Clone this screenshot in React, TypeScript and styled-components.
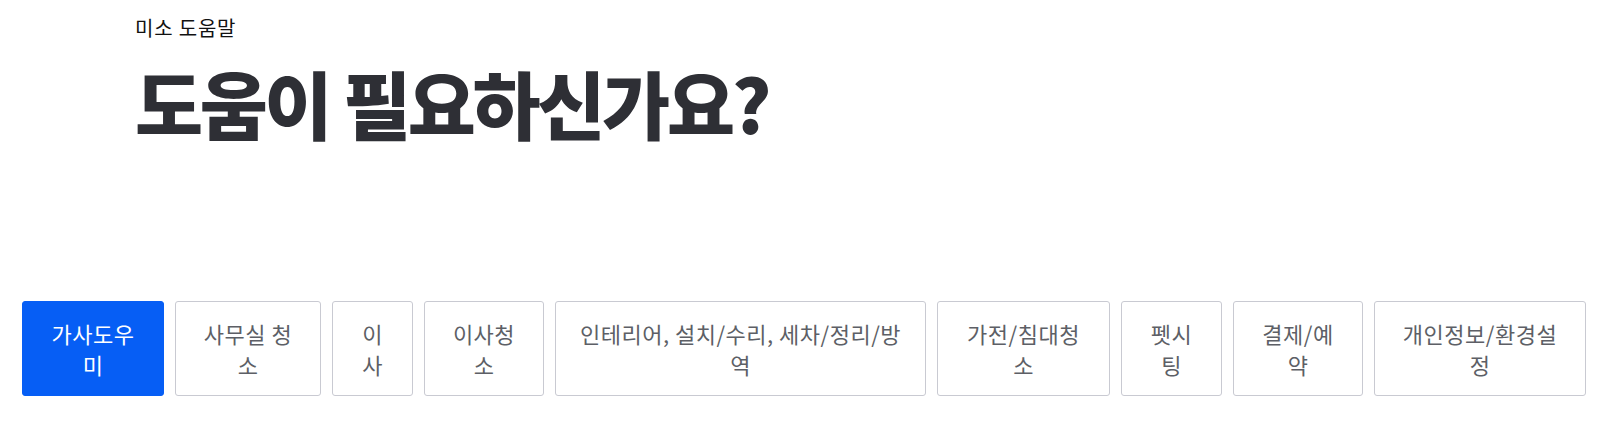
import React from "react";
import styled, { createGlobalStyle } from "styled-components";

const GlobalStyle = createGlobalStyle`
  html, body {
    margin: 0;
    padding: 0;
    background: #ffffff;
  }
  body {
    font-family: "Noto Sans CJK KR", "Noto Sans", sans-serif;
  }
  * { box-sizing: border-box; }
`;

const Page = styled.div`
  width: 1614px;
  height: 427px;
  overflow: hidden;
  background: #ffffff;
  padding-top: 14px;
`;

const Header = styled.header`
  padding-left: 135px;
`;

const Breadcrumb = styled.div`
  font-size: 20px;
  line-height: 28px;
  letter-spacing: 0.8px;
  color: #111111;
`;

const Title = styled.h1`
  margin: 18px 0 0;
  font-size: 74px;
  line-height: 84px;
  font-weight: 900;
  letter-spacing: -3.3px;
  color: #2e2f35;
`;

const CategoryRow = styled.nav`
  display: flex;
  gap: 11px;
  padding-left: 22px;
  margin-top: 157px;
`;

const CategoryButton = styled.button<{ $w: number; $active?: boolean }>`
  width: ${(p) => p.$w}px;
  flex: none;
  height: 95px;
  padding: 0 21px;
  display: flex;
  align-items: center;
  justify-content: center;
  text-align: center;
  word-break: break-all;
  font-family: "Noto Sans CJK KR", "Noto Sans", sans-serif;
  font-size: 22px;
  line-height: 31px;
  letter-spacing: 0.5px;
  font-weight: 400;
  border-radius: 3px;
  cursor: pointer;
  border: 1px solid ${(p) => (p.$active ? "#065ef5" : "#c9cad2")};
  background: ${(p) => (p.$active ? "#065ef5" : "#ffffff")};
  color: ${(p) => (p.$active ? "#ffffff" : "#5d5f66")};
`;

const categories = [
  { label: "가사도우미", w: 142, active: true },
  { label: "사무실 청소", w: 146 },
  { label: "이사", w: 81 },
  { label: "이사청소", w: 120 },
  { label: "인테리어, 설치/수리, 세차/정리/방역", w: 371 },
  { label: "가전/침대청소", w: 173 },
  { label: "펫시팅", w: 101 },
  { label: "결제/예약", w: 130 },
  { label: "개인정보/환경설정", w: 212 },
];

export default function App() {
  return (
    <>
      <GlobalStyle />
      <Page>
        <Header>
          <Breadcrumb>미소 도움말</Breadcrumb>
          <Title>도움이 필요하신가요?</Title>
        </Header>
        <CategoryRow>
          {categories.map((c) => (
            <CategoryButton key={c.label} $w={c.w} $active={c.active}>
              {c.label}
            </CategoryButton>
          ))}
        </CategoryRow>
      </Page>
    </>
  );
}
